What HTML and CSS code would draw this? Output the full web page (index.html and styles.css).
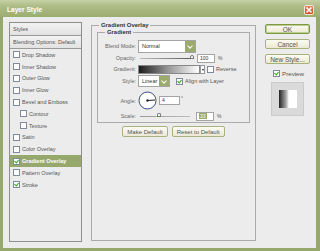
FILE: index.html
```html
<!DOCTYPE html>
<html lang="en">

<head>
    <meta charset="UTF-8">
    <title>Layer Style</title>
    <link rel="stylesheet" href="styles.css">
</head>

<body>
    <div class="window">
        <div class="titlebar">
            <span class="title">Layer Style</span>
            <span class="close">
                <svg width="8" height="8" viewBox="0 0 8 8">
                    <path d="M1.5 1.5 L6.5 6.5 M6.5 1.5 L1.5 6.5" stroke="#fff" stroke-width="1.6" />
                </svg>
            </span>
        </div>

        <div class="content">
            <!-- styles list -->
            <div class="stylesList">
                <div class="listHead">Styles</div>
                <div class="listHead">Blending Options: Default</div>
                <div class="item"><span class="cb"></span><span>Drop Shadow</span></div>
                <div class="item"><span class="cb"></span><span>Inner Shadow</span></div>
                <div class="item"><span class="cb"></span><span>Outer Glow</span></div>
                <div class="item"><span class="cb"></span><span>Inner Glow</span></div>
                <div class="item"><span class="cb"></span><span>Bevel and Emboss</span></div>
                <div class="item sub"><span class="cb"></span><span>Contour</span></div>
                <div class="item sub"><span class="cb"></span><span>Texture</span></div>
                <div class="item"><span class="cb"></span><span>Satin</span></div>
                <div class="item"><span class="cb"></span><span>Color Overlay</span></div>
                <div class="item selected"><span class="cb on"></span><span>Gradient Overlay</span></div>
                <div class="item"><span class="cb"></span><span>Pattern Overlay</span></div>
                <div class="item"><span class="cb on"></span><span>Stroke</span></div>
            </div>

            <!-- settings -->
            <div class="group outer">
                <span class="legend">Gradient Overlay</span>
                <div class="group inner">
                    <span class="legend">Gradient</span>

                    <div class="row rowBlend">
                        <span class="label">Blend Mode:</span>
                        <span class="select wide">Normal<span class="arrow"></span></span>
                    </div>
                    <div class="row rowOpacity">
                        <span class="label">Opacity:</span>
                        <span class="slider"><span class="thumb thumbOpacity"></span></span>
                        <span class="num">100</span>
                        <span class="unit">%</span>
                    </div>
                    <div class="row rowGradient">
                        <span class="label">Gradient:</span>
                        <span class="gradBar"></span>
                        <span class="gradDrop"></span>
                        <span class="cb"></span>
                        <span class="opt">Reverse</span>
                    </div>
                    <div class="row rowStyle">
                        <span class="label">Style:</span>
                        <span class="select small">Linear<span class="arrow"></span></span>
                        <span class="cb on"></span>
                        <span class="opt">Align with Layer</span>
                    </div>
                    <div class="row rowAngle">
                        <span class="label">Angle:</span>
                        <span class="dial">
                            <svg width="19" height="19" viewBox="0 0 19 19">
                                <circle cx="9.5" cy="9.5" r="8.5" fill="#fff" stroke="#3b4a86" stroke-width="1" />
                                <line x1="9.5" y1="9.5" x2="17" y2="9" stroke="#222" stroke-width="1" />
                                <circle cx="9.5" cy="9.5" r="1.2" fill="#222" />
                            </svg>
                        </span>
                        <span class="num angleNum">4</span>
                        <span class="unit deg">°</span>
                    </div>
                    <div class="row rowScale">
                        <span class="label">Scale:</span>
                        <span class="slider scaleSlider"><span class="thumb thumbScale"></span></span>
                        <span class="num scaleNum"><span class="sel">33</span></span>
                        <span class="unit">%</span>
                    </div>
                </div>

                <div class="btnRow">
                    <span class="btn">Make Default</span>
                    <span class="btn">Reset to Default</span>
                </div>
            </div>

            <!-- buttons and preview -->
            <div class="side">
                <span class="btn big ok">OK</span>
                <span class="btn big">Cancel</span>
                <span class="btn big">New Style...</span>
                <div class="preview">
                    <span class="cb on"></span>Preview
                </div>
                <div class="swatch">
                    <span class="swatchInner"></span>
                </div>
            </div>
        </div>
    </div>
</body>

</html>
```

FILE: styles.css
```css
body {
    margin: 0;
    padding: 0;
    background-color: #ececec;
    font-family: "Liberation Sans", Arial, sans-serif;
    font-size: 5.5px;
    color: #555;
}

.window {
    width: 320px;
    height: 251px;
    box-sizing: border-box;
    display: flex;
    flex-direction: column;
    background: #97a86c;
    padding: 0 4px 3px 3px;
}

.titlebar {
    height: 17px;
    margin: 0 -4px 0 -3px;
    background: linear-gradient(#c6d0a6, #acba84 40%, #9cad71);
    display: flex;
    align-items: center;
    padding: 0 6px 0 7px;
}

.title {
    color: #fff;
    font-weight: bold;
    font-size: 6.6px;
    flex: 1;
    margin-top: 1px;
}

.close {
    width: 10px;
    height: 10px;
    box-sizing: border-box;
    border: 1px solid #f3e6dc;
    border-radius: 2px;
    background: linear-gradient(#e98560, #cf4a24);
    display: flex;
    align-items: center;
    justify-content: center;
    margin-top: 3px;
}

.content {
    flex: 1;
    background: #ececec;
    display: flex;
    padding: 5px 0 0 6px;
}

/* left list */
.stylesList {
    width: 73px;
    height: 220px;
    box-sizing: border-box;
    border: 1px solid #8e8e8e;
    background: #ececec;
}

.listHead {
    height: 12px;
    line-height: 12px;
    padding-left: 3px;
    border-bottom: 1px solid #9a9a9a;
    background: linear-gradient(#f2f2f2, #e2e2e2);
    color: #555;
    white-space: nowrap;
}

.item {
    height: 11.8px;
    display: flex;
    align-items: center;
    padding-left: 3px;
    color: #555;
    white-space: nowrap;
}

.item.sub {
    padding-left: 10px;
}

.item.selected {
    background: #97a86c;
    color: #fff;
    font-weight: bold;
}

.cb {
    width: 7px;
    height: 7px;
    box-sizing: border-box;
    border: 1px solid #7f8a9a;
    background: #fff;
    margin-right: 2px;
    flex: none;
    position: relative;
}

.cb.on::after {
    content: "";
    position: absolute;
    left: 1px;
    top: 0px;
    width: 2px;
    height: 3px;
    border: solid #2fa51e;
    border-width: 0 1.2px 1.2px 0;
    transform: rotate(40deg);
}

/* groups */
.group {
    position: relative;
    box-sizing: border-box;
    border: 1px solid #ababab;
}

.outer {
    width: 165px;
    height: 216px;
    margin: 3px 0 0 9px;
    padding: 6px 5px 0 5px;
}

.inner {
    height: 91px;
    padding: 6px 0 0 0;
}

.legend {
    position: absolute;
    top: -4px;
    left: 7px;
    background: #ececec;
    padding: 0 2px;
    font-weight: bold;
    font-size: 5.9px;
    color: #333;
    line-height: 7px;
}

.row {
    display: flex;
    align-items: center;
}

.label {
    width: 40px;
    flex: none;
    text-align: right;
    padding-right: 2px;
    box-sizing: border-box;
    color: #666;
}

.rowBlend {
    height: 14px;
}

.rowOpacity {
    height: 10px;
}

.rowGradient {
    height: 12px;
}

.rowStyle {
    height: 12px;
}

.rowAngle {
    height: 21px;
    margin-top: 3px;
}

.rowScale {
    height: 10px;
}

.select {
    height: 13px;
    box-sizing: border-box;
    border: 1px solid #a4a4a4;
    background: #fff;
    display: flex;
    align-items: center;
    padding-left: 3px;
    color: #333;
    position: relative;
}

.select.wide {
    width: 58px;
}

.select.small {
    width: 32px;
    height: 12px;
}

.arrow {
    position: absolute;
    right: 0;
    top: 0;
    bottom: 0;
    width: 10px;
    background: #9aab6c;
}

.arrow::after {
    content: "";
    position: absolute;
    left: 3px;
    top: 3px;
    width: 3px;
    height: 3px;
    border: solid #fff;
    border-width: 0 1px 1px 0;
    transform: rotate(45deg);
}

.slider {
    width: 54px;
    height: 1px;
    margin: 0 3px 0 2px;
    background: linear-gradient(90deg, #bbb, #555);
    position: relative;
}

.scaleSlider {
    width: 50px;
    margin-right: 6px;
    background: linear-gradient(90deg, #999, #bbb);
}

.thumb {
    position: absolute;
    top: -3px;
    width: 4px;
    height: 4px;
    box-sizing: border-box;
    border: 1px solid #777;
    border-top-left-radius: 2px;
    border-top-right-radius: 2px;
    background: #fff;
}

.thumbOpacity {
    left: 50px;
}

.thumbScale {
    left: 17px;
    border-bottom: 1px solid #4a9b2a;
}

.num {
    width: 18px;
    height: 9px;
    box-sizing: border-box;
    border: 1px solid #a4a4a4;
    background: #fff;
    color: #333;
    font-size: 5px;
    line-height: 7px;
    padding-left: 2px;
}

.angleNum {
    width: 21px;
    margin-left: 2px;
}

.scaleNum .sel {
    background: #9aab6c;
    color: #fff;
    padding: 0 1px;
}

.unit {
    margin-left: 3px;
    font-size: 5px;
}

.deg {
    margin-left: 1px;
    margin-top: -5px;
}

.gradBar {
    width: 62px;
    height: 9px;
    box-sizing: border-box;
    border: 1px solid #888;
    background: linear-gradient(90deg, #1d1d1d, #9a9a9a 50%, #fff);
}

.gradDrop {
    width: 5px;
    height: 9px;
    box-sizing: border-box;
    border: 1px solid #999;
    background: #fff;
    margin-right: 2px;
    position: relative;
}

.gradDrop::after {
    content: "";
    position: absolute;
    left: 1px;
    top: 3px;
    border: 1px solid transparent;
    border-top: 2px solid #222;
}

.opt {
    color: #555;
}

.rowStyle .cb {
    margin-left: 6px;
}

.dial {
    display: flex;
}

.btnRow {
    display: flex;
    justify-content: center;
    gap: 4px;
    margin-top: 3px;
}

.btn {
    height: 11px;
    box-sizing: border-box;
    border: 1px solid #a9b27f;
    border-radius: 2px;
    background: linear-gradient(#fbfbf3, #ece9d4);
    color: #555;
    font-size: 6px;
    display: flex;
    align-items: center;
    justify-content: center;
    padding: 0 4px;
}

/* right column */
.side {
    width: 45px;
    margin: 2px 0 0 9px;
    display: flex;
    flex-direction: column;
    gap: 5px;
}

.btn.big {
    height: 10px;
    padding: 0;
    font-size: 6.5px;
}

.btn.ok {
    border-color: #7c9a43;
    box-shadow: inset 0 0 0 1px #bccb8e;
}

.preview {
    display: flex;
    align-items: center;
    margin: 1px 0 0 8px;
    font-size: 6.2px;
    color: #555;
}

.swatch {
    width: 33px;
    height: 34px;
    margin: 0 0 0 6px;
    box-sizing: border-box;
    background: #dadada;
    border: 1px solid #cacaca;
    display: flex;
    align-items: center;
    justify-content: center;
}

.swatchInner {
    width: 18px;
    height: 18px;
    background: linear-gradient(90deg, #222, #aaa 40%, #fff 55%, #fff);
}
```
